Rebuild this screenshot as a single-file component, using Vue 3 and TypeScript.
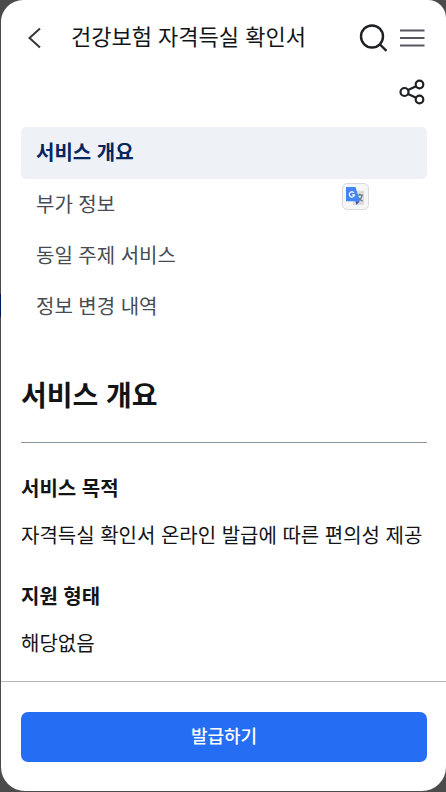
<script setup lang="ts">
import { ref } from 'vue'

interface Tab {
  id: string
  label: string
}

interface Detail {
  title: string
  text: string
}

const tabs: Tab[] = [
  { id: 'overview', label: '서비스 개요' },
  { id: 'extra', label: '부가 정보' },
  { id: 'related', label: '동일 주제 서비스' },
  { id: 'history', label: '정보 변경 내역' },
]

const details: Detail[] = [
  { title: '서비스 목적', text: '자격득실 확인서 온라인 발급에 따른 편의성 제공' },
  { title: '지원 형태', text: '해당없음' },
]

const activeTab = ref<string>('overview')
</script>

<template>
  <div class="backdrop">
    <div class="sheet">
      <header class="header">
        <button class="icon-button" type="button" aria-label="뒤로">
          <svg width="28" height="28" viewBox="0 0 28 28" fill="none" stroke="#33363d" stroke-width="2">
            <path d="M19 4.500L8.500 14L19 23.500" />
          </svg>
        </button>
        <h1 class="title">건강보험 자격득실 확인서</h1>
        <button class="icon-button" type="button" aria-label="검색">
          <svg width="28" height="28" viewBox="0 0 28 28" fill="none" stroke="#1e2124" stroke-width="2.400">
            <circle cx="13" cy="12.500" r="11" />
            <path d="M20.500 20L27.500 27" />
          </svg>
        </button>
        <button class="icon-button" type="button" aria-label="메뉴">
          <svg width="26" height="28" viewBox="0 0 26 28" fill="none" stroke="#55585f" stroke-width="2.200">
            <path d="M1 6.500H25.500M1 14H25.500M1 21.500H25.500" />
          </svg>
        </button>
      </header>

      <div class="tools">
        <button class="icon-button" type="button" aria-label="공유">
          <svg width="26" height="26" viewBox="0 0 26 26" fill="none" stroke="#1e2124" stroke-width="2.200">
            <circle cx="5.500" cy="13" r="4" />
            <circle cx="20.500" cy="5.500" r="3.800" />
            <circle cx="20.500" cy="20.500" r="3.800" />
            <path d="M9 11L17.200 7.200M9 15L17.200 18.800" />
          </svg>
        </button>
      </div>

      <main class="main">
        <nav class="tabs" aria-label="목차">
          <a
            v-for="tab in tabs"
            :key="tab.id"
            class="tab"
            :class="{ active: tab.id === activeTab }"
            :href="`#${tab.id}`"
            @click="activeTab = tab.id"
          >{{ tab.label }}</a>
          <button class="translate" type="button" aria-label="번역">
            <svg width="19" height="19" viewBox="0 0 20 20">
              <rect x="7" y="4" width="12" height="15" rx="1" fill="#dcdcdc" />
              <path d="M11 8.500H18M14.500 7V8.500M17 8.500C16.500 11.500 14.500 13.500 12 14.500M12.500 10.500C13.500 12.500 15 14 17.500 14.800" fill="none" stroke="#607d8b" stroke-width="1.300" />
              <path d="M10 15H14.500L11 19Z" fill="#3a49b5" />
              <path d="M0 0H10L14.500 15H0Z" fill="#4285f4" />
              <path d="M8.400 6.300A2.700 2.700 0 1 0 8.900 8.400H6.500" fill="none" stroke="#fff" stroke-width="1.300" />
            </svg>
          </button>
        </nav>

        <section id="overview">
          <h2 class="heading">서비스 개요</h2>
          <div class="details">
            <div v-for="detail in details" :key="detail.title">
              <h3 class="detail-title">{{ detail.title }}</h3>
              <p class="detail-text">{{ detail.text }}</p>
            </div>
          </div>
        </section>
      </main>

      <footer class="footer">
        <button class="submit" type="button">발급하기</button>
      </footer>
    </div>
  </div>
</template>

<style>
body {
  margin: 0;
}
</style>

<style scoped>
.backdrop {
  box-sizing: border-box;
  display: flex;
  min-height: 100vh;
  padding: 0 0 1px 1px;
  background: linear-gradient(#4b4b4b 294px, #001a55 294px, #001a55 317px, #4b4b4b 317px);
  font-family: "Liberation Sans", "Noto Sans CJK KR", sans-serif;
  color: #131416;
}

.sheet {
  display: flex;
  flex: 1;
  flex-direction: column;
  min-width: 0;
  border-radius: 22px 18px 24px 24px;
  background: #fff;
}

.icon-button {
  display: flex;
  flex: none;
  padding: 0;
  border: 0;
  background: none;
  cursor: pointer;
}

.header {
  display: flex;
  align-items: center;
  gap: 12px;
  height: 76px;
  padding: 0 21px 0 20px;
}

.title {
  flex: 1;
  margin: 0;
  padding-left: 10px;
  font-size: 22px;
  line-height: 32px;
  font-weight: 400;
  white-space: nowrap;
}

.tools {
  display: flex;
  justify-content: flex-end;
  padding: 3px 21px 22px;
}

.main {
  flex: 1;
  padding: 0 19px 0 20px;
}

.tabs {
  position: relative;
  display: flex;
  flex-direction: column;
}

.tab {
  padding: 11px 15px 10px;
  border-radius: 5px;
  font-size: 20px;
  line-height: 30px;
  color: #464c53;
  text-decoration: none;
}

.tab.active {
  padding-bottom: 11px;
  background: #eef2f7;
  color: #052561;
  font-weight: 700;
}

.translate {
  position: absolute;
  top: 56px;
  right: 58px;
  display: flex;
  padding: 3px;
  border: 1px solid #dadada;
  border-radius: 5px;
  background: #f6f6f6;
}

.heading {
  margin: 45px 0 31px;
  padding-bottom: 25px;
  border-bottom: 1px solid #8a949e;
  font-size: 28px;
  line-height: 40px;
  font-weight: 700;
}

.details {
  display: flex;
  flex-direction: column;
  gap: 31px;
  padding-bottom: 22px;
}

.detail-title {
  margin: 0 0 17px;
  font-size: 20px;
  line-height: 30px;
  font-weight: 700;
}

.detail-text {
  margin: 0;
  font-size: 20px;
  line-height: 30px;
}

.footer {
  padding: 30px 19px 29px 20px;
  border-top: 1px solid #b1b8be;
}

.submit {
  width: 100%;
  padding: 11px;
  border: 0;
  border-radius: 7px;
  background: #256ef4;
  color: #fff;
  font-family: inherit;
  font-size: 18px;
  line-height: 28px;
  font-weight: 500;
  cursor: pointer;
}
</style>
